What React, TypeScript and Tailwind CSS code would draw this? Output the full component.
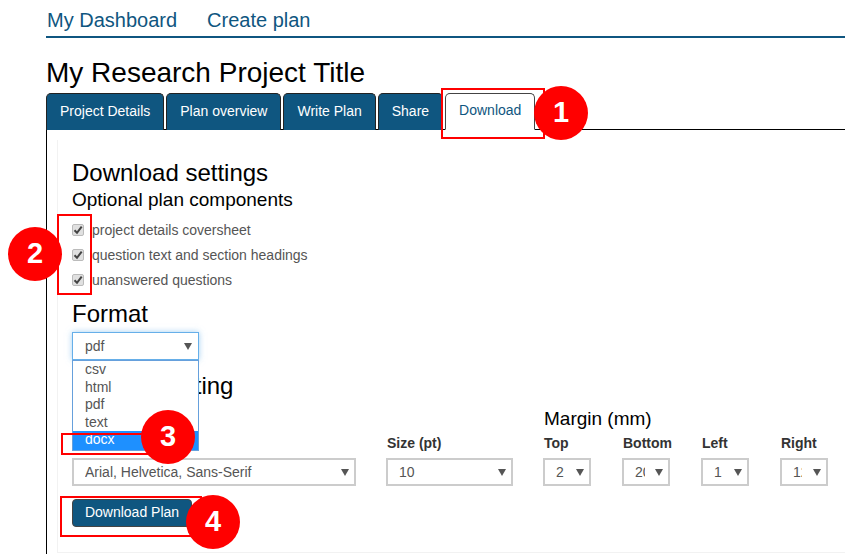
import React from 'react';

const tabs = ['Project Details', 'Plan overview', 'Write Plan', 'Share'];
const formats = ['csv', 'html', 'pdf', 'text'];

const Caret = () => (
  <svg width="8" height="7" viewBox="0 0 8 7" className="shrink-0">
    <path d="M0 0H8L4 7Z" fill="#555" />
  </svg>
);

const SelectBox = ({ value, width, clip }: { value: string; width: string; clip?: string }) => (
  <div className={`${width} h-[28px] border-2 border-[#ccc] bg-white flex items-center justify-between pl-[11px] pr-[5px] text-[14px] text-[#555]`}>
    <span className={`overflow-hidden whitespace-nowrap ${clip ?? ''}`}>{value}</span>
    <Caret />
  </div>
);

const CheckRow = ({ label }: { label: string }) => (
  <div className="flex items-center h-[25px] text-[14px] text-[#555]">
    <div className="w-[12px] h-[12px] mr-[8px] rounded-[2px] bg-[#e0e0e0] border border-[#bbb] flex items-center justify-center">
      <svg width="10" height="10" viewBox="0 0 10 10">
        <path d="M1.5 5.2L4 7.8L8.7 1.6" fill="none" stroke="#444" strokeWidth="2" />
      </svg>
    </div>
    <span className="pt-[2px]">{label}</span>
  </div>
);

const Badge = ({ n, className }: { n: number; className: string }) => (
  <div className={`absolute w-[54px] h-[54px] rounded-full bg-[#ff0000] text-white text-[29px] font-bold flex items-center justify-center ${className}`}>
    {n}
  </div>
);

const App: React.FC = () => {
  return (
    <div className="relative h-[554px] w-[845px] overflow-hidden bg-white pl-[46px] font-['Liberation_Sans',Arial,sans-serif]">
      {/* Top nav */}
      <nav className="flex gap-[30px] h-[38px] pl-[1px] pt-[7px] border-b-2 border-[#0f5680] text-[20px] leading-[26px] text-[#0f5680]">
        <a>My Dashboard</a>
        <a>Create plan</a>
      </nav>

      <h1 className="mt-[19px] h-[36px] text-[28px] leading-[32px] text-black">My Research Project Title</h1>

      {/* Tabs */}
      <div className="flex gap-[2px] h-[37px] border-b border-black">
        {tabs.map((t) => (
          <div key={t} className="h-[37px] px-[13px] pb-[2px] flex items-center bg-[#0f5680] border border-[#222] border-b-0 rounded-t-[5px] text-[14px] text-white">
            {t}
          </div>
        ))}
        <div className="h-[37px] px-[13px] pb-[2px] flex items-center bg-white border border-[#444] border-b-white rounded-t-[5px] text-[14px] text-[#0f5680]">
          Download
        </div>
      </div>

      {/* Panel */}
      <div className="h-[424px] border-l border-black pl-[10px] pt-[10px]">
        <div className="h-[413px] border-l border-b border-[#f2f2f2] pl-[14px] pt-[19px]">
          <h2 className="text-[24px] leading-[28px] text-black">Download settings</h2>
          <h3 className="mt-[1px] text-[19px] leading-[24px] text-black">Optional plan components</h3>
          <div className="mt-[5px]">
            <CheckRow label="project details coversheet" />
            <CheckRow label="question text and section headings" />
            <CheckRow label="unanswered questions" />
          </div>

          <h2 className="mt-[8px] text-[24px] leading-[28px] text-black">Format</h2>
          <div className="relative mt-[4px] w-[127px] h-[28px]">
            <div className="h-[28px] border border-[#66afe9] shadow-[0_0_6px_rgba(102,175,233,0.6)] bg-white flex items-center justify-between pl-[12px] pr-[6px] text-[14px] text-[#555]">
              pdf
              <Caret />
            </div>
            <ul className="absolute z-10 left-0 top-[28px] w-[127px] h-[91px] bg-white border border-[#66a0dc] text-[14px] text-[#555]">
              {formats.map((f) => (
                <li key={f} className="h-[17.5px] leading-[17px] pl-[12px]">{f}</li>
              ))}
              <li className="h-[19px] leading-[17px] pl-[12px] bg-[#1e90ff] text-white">docx</li>
            </ul>
          </div>

          {/* Left part of this heading is covered by the open list */}
          <h2 className="mt-[12px] h-[28px] text-[24px] leading-[28px] text-black">Font formatting</h2>

          {/* Font and margin settings */}
          <div className="mt-[8px] flex gap-[30px]">
            <div className="flex flex-col justify-end">
              <SelectBox value="Arial, Helvetica, Sans-Serif" width="w-[284px]" />
            </div>
            <div className="flex flex-col justify-end">
              <label className="pl-[1px] text-[14px] font-bold text-[#333] leading-[20px] mb-[5px]">Size (pt)</label>
              <SelectBox value="10" width="w-[127px]" />
            </div>
            <div>
              <div className="h-[25px] pl-[1px] text-[19px] leading-[22px] text-black">Margin (mm)</div>
              <div className="flex gap-[31px]">
                {[
                  { label: 'Top', value: '2', clip: 'w-[9px]' },
                  { label: 'Bottom', value: '20', clip: 'w-[10px]' },
                  { label: 'Left', value: '1', clip: 'w-[9px]' },
                  { label: 'Right', value: '12', clip: 'w-[9px]' },
                ].map((m) => (
                  <div key={m.label} className="w-[48px]">
                    <label className="block pl-[1px] whitespace-nowrap text-[14px] font-bold text-[#333] leading-[20px] mb-[5px]">{m.label}</label>
                    <SelectBox value={m.value} width="w-[48px]" clip={m.clip} />
                  </div>
                ))}
              </div>
            </div>
          </div>

          <button className="mt-[13px] w-[120px] h-[28px] pb-[2px] rounded-[4px] bg-[#0f5680] border border-[#444] text-[14px] text-white">
            Download Plan
          </button>
        </div>
      </div>

      {/* Annotations */}
      <div className="absolute left-[441px] top-[88px] w-[104px] h-[51px] border-2 border-[#ff0000]" />
      <div className="absolute left-[57px] top-[214px] w-[35px] h-[81px] border-2 border-[#ff0000]" />
      <div className="absolute z-20 left-[61px] top-[433px] w-[100px] h-[22px] border-2 border-r-0 border-[#ff0000]" />
      <div className="absolute left-[60px] top-[496px] w-[142px] h-[41px] border-2 border-[#ff0000]" />
      <Badge n={1} className="left-[534px] top-[86px]" />
      <Badge n={2} className="left-[8px] top-[227px]" />
      <Badge n={3} className="z-30 left-[141px] top-[410px]" />
      <Badge n={4} className="left-[186px] top-[495px]" />
    </div>
  );
};

export default App;
